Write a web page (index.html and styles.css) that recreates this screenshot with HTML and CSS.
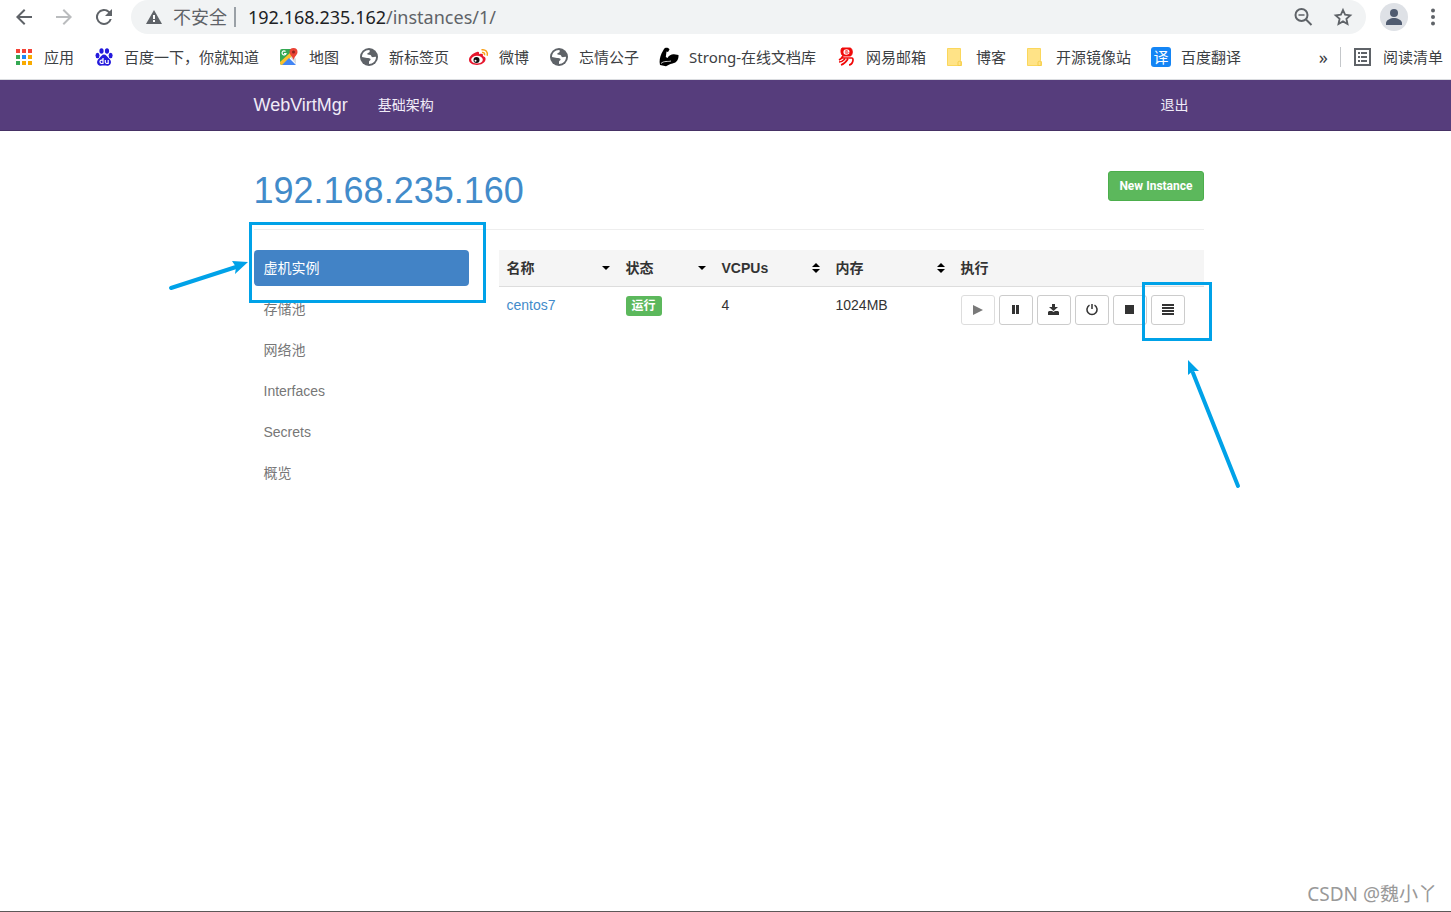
FILE: index.html
```html
<!DOCTYPE html>
<html lang="zh-CN">
<head>
  <meta charset="UTF-8" />
  <meta name="viewport" content="width=device-width, initial-scale=1.0"/>
  <title>WebVirtMgr</title>
  <link rel="stylesheet" href="styles.css">
</head>
<body>
  <header class="browser">
    <div class="toolbar">
      <button class="tool-btn" aria-label="后退"><svg width="24" height="24" viewBox="0 0 24 24"><path d="M20 11H7.83l5.59-5.59L12 4l-8 8 8 8 1.41-1.41L7.83 13H20z"/></svg></button>
      <button class="tool-btn dim" aria-label="前进"><svg width="24" height="24" viewBox="0 0 24 24"><path d="M4 11h12.17l-5.59-5.59L12 4l8 8-8 8-1.41-1.41L16.17 13H4z"/></svg></button>
      <button class="tool-btn" aria-label="刷新"><svg width="24" height="24" viewBox="0 0 24 24"><path d="M17.65 6.35A8 8 0 1 0 19.73 14h-2.08A6 6 0 1 1 12 6c1.66 0 3.14.69 4.22 1.78L13 11h7V4z"/></svg></button>
      <div class="omnibox">
        <svg width="18" height="18" viewBox="0 0 18 18"><path fill="#5f6368" d="M9 2 17 16H1z"/><path fill="#fff" d="M8 7h2v4H8zM8 12h2v2H8z"/></svg>
        <span class="insecure">不安全</span>
        <div class="url" role="textbox" contenteditable="true" aria-label="地址"><span class="host">192.168.235.162</span>/instances/1/</div>
        <button class="omni-btn" aria-label="缩放"><svg width="24" height="24" viewBox="0 0 24 24" fill="none" stroke="#5f6368" stroke-width="2"><circle cx="10.500" cy="10" r="6"/><path d="m15 14.500 5.500 5.500"/><path stroke-width="1.500" d="M7.500 10h6"/></svg></button>
        <button class="omni-btn" aria-label="收藏"><svg width="24" height="24" viewBox="0 0 24 24"><path fill="none" stroke="#5f6368" stroke-width="1.800" d="m12 5 2.100 4.700 5.200.6-3.900 3.500 1.100 5.200-4.500-2.600L7.500 19l1.100-5.200-3.900-3.500 5.200-.6z"/></svg></button>
      </div>
      <button class="avatar" aria-label="用户"><svg width="28" height="28" viewBox="0 0 28 28"><circle cx="14" cy="14" r="14" fill="#dee1e6"/><circle cx="14" cy="10" r="4" fill="#4f5b70"/><path fill="#4f5b70" d="M6 22v-2c0-3 5-5 8-5s8 2 8 5v2z"/></svg></button>
      <button class="menu-btn" aria-label="菜单"><svg width="24" height="24" viewBox="0 0 24 24" fill="#5f6368"><circle cx="12" cy="5.500" r="2"/><circle cx="12" cy="12" r="2"/><circle cx="12" cy="18.500" r="2"/></svg></button>
    </div>

    <nav class="bookmarks">
      <a href="#"><svg width="20" height="20" viewBox="0 0 20 20"><path fill="#f44336" d="M2 2h4v4H2zM8 2h4v4H8zM14 2h4v4h-4z"/><path fill="#34a853" d="M2 8h4v4H2zM2 14h4v4H2z"/><path fill="#1e88f5" d="M8 8h4v4H8z"/><path fill="#f9ab00" d="M14 8h4v4h-4zM8 14h4v4H8zM14 14h4v4h-4z"/></svg>应用</a>
      <a href="#"><svg width="20" height="20" viewBox="0 0 20 20" fill="#2319dc"><ellipse cx="7.500" cy="4" rx="2.100" ry="2.800"/><ellipse cx="13" cy="4" rx="2.100" ry="2.800"/><ellipse cx="3.500" cy="8.500" rx="2" ry="2.700"/><ellipse cx="16.600" cy="8.500" rx="2" ry="2.700"/><path d="M10 7.500c2 0 3 2 4.500 3.600 2 1.600 3.300 3.600 2 5.900-1.300 2.500-4 1.500-6.500 1.500s-5.200 1-6.500-1.500c-1.200-2.300.2-4.300 2-5.900C7 9.500 8 7.500 10 7.500z"/><path fill="none" stroke="#fff" stroke-width="1.200" d="M9 11v5.500H7.500c-2 0-2-3.300 0-3.300H9M11.300 13v2c0 1.500.7 1.500 2.900 1.500V13"/></svg>百度一下，你就知道</a>
      <a href="#"><svg width="20" height="20" viewBox="0 0 20 20"><path fill="#34a853" d="M3 2h12v16H3a2 2 0 0 1-2-2V4a2 2 0 0 1 2-2z"/><path fill="#fff" d="m9 10 8-7v15h-2z"/><path fill="#dadce0" d="m11 10 3-2 3 4v5z"/><path fill="#fbc02d" d="M1 15 12 5l2 3L4 18H3a2 2 0 0 1-2-2z"/><path fill="#4285f4" d="m3 18 7-7 7 7z"/><path fill="none" stroke="#fff" stroke-width="1.200" d="M6.500 4.500a2 2 0 1 0 .5 2H5"/><path fill="#ea4335" d="M14.500 1a4 4 0 0 0-4 4c0 3 3 4 4 8 1-4 4-5 4-8a4 4 0 0 0-4-4z"/><circle cx="14.500" cy="5" r="1.500" fill="#8c231c"/></svg>地图</a>
      <a href="#"><svg width="20" height="20" viewBox="0 0 20 20"><circle cx="10" cy="10" r="9" fill="#5f6368"/><path fill="#fff" d="M10 3c1 0 1 2 0 2.500-1.500.5-2 1-1.500 2l3 .5c1 .5.500 1.500 1.500 2s3-.5 4 0c0 4-3 7-7 7v-2.500c0-1 2-1 1.500-2.500-.5-1-2-1-3.500-1L3 10c0-4 3-7 7-7z"/><path fill="#5f6368" d="M12 3.500c3 1 4 3 4.500 5l-3-.5-1-1.500-1-.5z"/></svg>新标签页</a>
      <a href="#"><svg width="20" height="20" viewBox="0 0 20 20"><path fill="#e6162d" d="M8 5c1.800-.6 2.600.3 2 2.300 3-1 4.500-.4 3.900 1.700 2.300.7 3 2 2.600 3.800C15.800 16 12 18 8 18c-4.500 0-8-2-8-5.200C0 9.500 4 6 8 5z"/><ellipse cx="8" cy="12.700" rx="5.800" ry="3.900" fill="#fff"/><circle cx="7.500" cy="12.900" r="3" fill="#111"/><circle cx="6.500" cy="13.700" r="1" fill="#fff"/><path fill="none" stroke="#f9a11b" stroke-width="1.500" d="M12.500 2.800c4-.8 6.700 2 5.700 6M13 5.500c2-.3 3 .9 2.500 2.700"/></svg>微博</a>
      <a href="#"><svg width="20" height="20" viewBox="0 0 20 20"><circle cx="10" cy="10" r="9" fill="#5f6368"/><path fill="#fff" d="M10 3c1 0 1 2 0 2.500-1.500.5-2 1-1.500 2l3 .5c1 .5.500 1.500 1.500 2s3-.5 4 0c0 4-3 7-7 7v-2.500c0-1 2-1 1.500-2.500-.5-1-2-1-3.500-1L3 10c0-4 3-7 7-7z"/><path fill="#5f6368" d="M12 3.500c3 1 4 3 4.500 5l-3-.5-1-1.500-1-.5z"/></svg>忘情公子</a>
      <a href="#"><svg width="20" height="20" viewBox="0 0 20 20"><path d="M5 2c1-2 5-1.500 5.500.5L9 5 7.500 4.500 6.800 10l1.700 1C10 8 13 7 15 7.300l4.500.6c.3 4-1.500 7.600-6 8.600-3 .7-4.500 2-6.500 2.800L1 18c-1-4 0-8 1.500-11.500z"/><path fill="none" stroke="#fff" stroke-width=".8" d="M2 16.500c3-3 7-1.500 10-2.500"/></svg>Strong-在线文档库</a>
      <a href="#"><svg width="20" height="20" viewBox="0 0 20 20" fill="none" stroke="#f00808"><path fill="#f00808" d="M6 1h8c3 0 3 8 0 8H8C5 9 4 3 6 1z"/><path stroke="#fff" stroke-width="1.200" d="M8 5h5c0-3-5-3-5 0s4 2.500 5 1"/><path stroke-width="1.700" d="M7 9c-1 2-2 3-4 4M5 11h11c2 0 1 7-3 7M9 12c-2 2-4 3-6 3M12 12c-2 3-4 5-7 6"/></svg>网易邮箱</a>
      <a href="#"><svg width="20" height="20" viewBox="0 0 20 20"><path fill="#ffe387" stroke="#fbd75b" d="M1.500 1.500h13v12l1 1.500v3.500h-14z"/><path fill="#ffe387" stroke="#f5cd4c" d="M12 18.500V15c0-1 3-1 3 0v3.500z"/></svg>博客</a>
      <a href="#"><svg width="20" height="20" viewBox="0 0 20 20"><path fill="#ffe387" stroke="#fbd75b" d="M1.500 1.500h13v12l1 1.500v3.500h-14z"/><path fill="#ffe387" stroke="#f5cd4c" d="M12 18.500V15c0-1 3-1 3 0v3.500z"/></svg>开源镜像站</a>
      <a href="#"><span class="fanyi">译</span>百度翻译</a>
      <button class="more">»</button>
      <a class="reading" href="#"><svg width="20" height="20" viewBox="0 0 20 20"><path fill="none" stroke="#5f6368" stroke-width="2" d="M2 2h15v16H2z"/><path fill="#5f6368" d="M5 5h2v2H5zM5 9h2v2H5zM5 13h2v2H5zM8 5h6v2H8zM8 9h6v2H8zM8 13h6v2H8z"/></svg>阅读清单</a>
    </nav>
  </header>

  <nav class="navbar">
    <div class="container">
      <a class="brand" href="#">WebVirtMgr</a>
      <a href="#">基础架构</a>
      <a class="logout" href="#">退出</a>
    </div>
  </nav>

  <main class="page">
    <div class="container">
      <div class="page-header">
        <h1><a href="#">192.168.235.160</a></h1>
        <button class="btn-success">New Instance</button>
      </div>

      <div class="columns">
        <ul class="sidebar">
          <li><a class="active" href="#">虚机实例</a></li>
          <li><a href="#">存储池</a></li>
          <li><a href="#">网络池</a></li>
          <li><a href="#">Interfaces</a></li>
          <li><a href="#">Secrets</a></li>
          <li><a href="#">概览</a></li>
          <li class="mark mark-menu" aria-hidden="true"></li>
          <li class="arrow arrow-menu" aria-hidden="true"><svg width="82" height="32" viewBox="0 0 82 32"><path fill="none" stroke="#00a2e8" stroke-width="4" stroke-linecap="round" d="M3 28 68 7"/><path fill="#00a2e8" d="M80 2 64 1l4 6-1 7z"/></svg></li>
        </ul>

        <table class="instances">
          <colgroup>
            <col class="col-name"><col class="col-state"><col class="col-cpu"><col class="col-mem"><col>
          </colgroup>
          <thead>
            <tr>
              <th><div class="sort">名称<svg width="8" height="10" viewBox="0 0 8 10"><path d="M0 3h8L4 7z"/></svg></div></th>
              <th><div class="sort">状态<svg width="8" height="10" viewBox="0 0 8 10"><path d="M0 3h8L4 7z"/></svg></div></th>
              <th><div class="sort">VCPUs<svg width="8" height="10" viewBox="0 0 8 10"><path d="M0 4h8L4 0zM0 6h8l-4 4z"/></svg></div></th>
              <th><div class="sort">内存<svg width="8" height="10" viewBox="0 0 8 10"><path d="M0 4h8L4 0zM0 6h8l-4 4z"/></svg></div></th>
              <th>执行</th>
            </tr>
          </thead>
          <tbody>
            <tr>
              <td><a href="#">centos7</a></td>
              <td><span class="label">运行</span></td>
              <td>4</td>
              <td>1024MB</td>
              <td>
                <div class="actions">
                  <button aria-label="启动" disabled><svg width="12" height="12" viewBox="0 0 12 12"><path d="M1 1v10l10-5z"/></svg></button>
                  <button aria-label="暂停"><svg width="12" height="12" viewBox="0 0 12 12"><path d="M2 1h3v9H2zM6 1h3v9H6z"/></svg></button>
                  <button aria-label="保存"><svg width="12" height="12" viewBox="0 0 12 12"><path d="M4 0h3v3h3L5.500 7 1 3h3zM1 7h3l1.500 1L7 7h3l1 1v3H0V8z"/></svg></button>
                  <button aria-label="电源"><svg width="12" height="12" viewBox="0 0 12 12" fill="none" stroke="#333" stroke-width="1.500"><path d="M3.500 1.200a5 5 0 1 0 5 0M6 0v5"/></svg></button>
                  <button aria-label="停止"><svg width="12" height="12" viewBox="0 0 12 12"><path d="M1 1h9v9H1z"/></svg></button>
                  <button aria-label="详情"><svg width="12" height="12" viewBox="0 0 12 12"><path d="M0 0h12v2H0zM0 3h12v2H0zM0 6h12v2H0zM0 9h12v2H0z"/></svg></button>
                  <span class="mark mark-action"></span>
                  <span class="arrow arrow-action"><svg width="58" height="132" viewBox="0 0 58 132"><path fill="none" stroke="#00a2e8" stroke-width="4" stroke-linecap="round" d="M53 128 8 15"/><path fill="#00a2e8" d="m3 2 11 11-6 0-5 4z"/></svg></span>
                </div>
              </td>
            </tr>
          </tbody>
        </table>
      </div>
    </div>
  </main>

  <footer class="watermark">CSDN @魏小丫</footer>
</body>
</html>
```
FILE: styles.css
```css
* {
  box-sizing: border-box;
}

body {
  margin: 0;
  min-height: 100vh;
  display: flex;
  flex-direction: column;
  background: #fff;
  color: #333;
  font: 14px/20px "Liberation Sans", "Noto Sans CJK SC", sans-serif;
}

a {
  color: #428bca;
  text-decoration: none;
}

button {
  padding: 0;
  border: none;
  background: none;
  font-family: inherit;
  cursor: pointer;
}

svg {
  display: block;
  flex: none;
}

/* browser bar */
.browser {
  border-bottom: 1px solid #dadce0;
  font-family: "Noto Sans", "Noto Sans CJK SC", sans-serif;
}

.toolbar {
  display: flex;
  align-items: center;
  height: 34px;
  padding: 0 6px 0 4px;
}

.tool-btn {
  display: flex;
  justify-content: center;
  width: 40px;
  fill: #5f6368;
}

.dim {
  fill: #babcbe;
}

.omnibox {
  flex: 1;
  display: flex;
  align-items: center;
  height: 34px;
  margin-left: 7px;
  padding: 0 11px 0 14px;
  border-radius: 17px;
  background: #f1f3f4;
  color: #5f6368;
  font-size: 18px;
}

.insecure {
  margin-left: 10px;
  padding-right: 7px;
  border-right: 2px solid #9aa0a6;
  white-space: nowrap;
}

.url {
  flex: 1;
  margin-left: 12px;
  white-space: nowrap;
}

.host {
  color: #202124;
}

.omni-btn {
  margin-left: 16px;
}

.avatar {
  margin-left: 14px;
}

.menu-btn {
  margin-left: 13px;
}

.bookmarks {
  display: flex;
  align-items: center;
  gap: 20px;
  height: 45px;
  padding: 0 8px 0 14px;
  white-space: nowrap;
  font-size: 15px;
}

.bookmarks a {
  display: flex;
  align-items: center;
  gap: 10px;
  color: #3c4043;
}

.fanyi {
  width: 20px;
  height: 20px;
  border-radius: 3px;
  background: #1485f5;
  color: #fff;
  font-size: 15px;
  line-height: 20px;
  text-align: center;
}

.bookmarks .more {
  margin-left: auto;
  color: #3c4043;
  font-size: 18px;
}

.bookmarks .reading {
  margin-left: -8px;
  padding-left: 12px;
  border-left: 1px solid #c4c7ca;
}

/* site */
.navbar,
.page {
  padding-left: 6px;
}

.navbar {
  background: #563d7c;
  border-bottom: 1px solid #463265;
}

.container {
  max-width: 950px;
  margin: 0 auto;
}

.navbar .container {
  display: flex;
  align-items: center;
  gap: 30px;
  height: 50px;
}

.navbar a {
  color: #f0ebf7;
}

.navbar .brand {
  font-size: 18px;
}

.navbar .logout {
  margin-left: auto;
  padding-right: 15px;
}

.page {
  flex: 1;
}

.page-header {
  display: flex;
  justify-content: space-between;
  align-items: flex-start;
  margin-top: 40px;
  padding-bottom: 18px;
  border-bottom: 1px solid #eee;
}

h1 {
  margin: 0;
  font-size: 36px;
  font-weight: normal;
  line-height: 40px;
}

.btn-success {
  height: 30px;
  padding: 0 10px;
  border: 1px solid #4cae4c;
  border-radius: 3px;
  background: #5cb85c;
  color: #fff;
  font-family: Roboto, sans-serif;
  font-size: 12px;
  font-weight: bold;
}

.columns {
  display: flex;
  align-items: flex-start;
  gap: 30px;
  margin-top: 20px;
}

.sidebar {
  position: relative;
  flex: none;
  display: flex;
  flex-direction: column;
  gap: 5px;
  width: 215px;
  margin: 0;
  padding: 0;
  list-style: none;
}

.sidebar a {
  display: block;
  padding: 8px 10px;
  border-radius: 4px;
  color: #777;
}

.sidebar .active {
  background: #4283c6;
  color: #fff;
}

.instances {
  flex: 1;
  table-layout: fixed;
  width: 100%;
  border-collapse: collapse;
}

.col-name {
  width: 119px;
}

.col-state {
  width: 96px;
}

.col-cpu {
  width: 114px;
}

.col-mem {
  width: 125px;
}

.instances th,
.instances td {
  padding: 8px;
  text-align: left;
  vertical-align: top;
}

.instances th {
  background: #f5f5f5;
  border-bottom: 1px solid #ddd;
}

.sort {
  display: flex;
  align-items: center;
  justify-content: space-between;
}

.label {
  display: inline-block;
  padding: 0 6px;
  border-radius: 3px;
  background: #5cb85c;
  color: #fff;
  font-size: 12px;
  font-weight: bold;
}

.actions {
  position: relative;
  display: flex;
  gap: 4px;
}

.actions button {
  display: flex;
  align-items: center;
  justify-content: center;
  width: 34px;
  height: 30px;
  border: 1px solid #ccc;
  border-radius: 3px;
  background: #fff;
  fill: #333;
}

.actions button:disabled {
  opacity: 0.65;
}

/* highlights drawn over the page */
.mark {
  position: absolute;
  border: 3px solid #00a2e8;
  pointer-events: none;
}

.arrow {
  position: absolute;
  pointer-events: none;
}

.mark-menu {
  left: -5px;
  top: -28px;
  width: 237px;
  height: 81px;
}

.arrow-menu {
  left: -86px;
  top: 10px;
}

.mark-action {
  left: 181px;
  top: -13px;
  width: 70px;
  height: 59px;
}

.arrow-action {
  left: 224px;
  top: 63px;
}

.watermark {
  padding: 5px 14px 3px;
  border-bottom: 1px solid #5c5858;
  color: #999;
  font: 19px/28px "Noto Sans", "Noto Sans CJK SC", sans-serif;
  text-align: right;
}
```
